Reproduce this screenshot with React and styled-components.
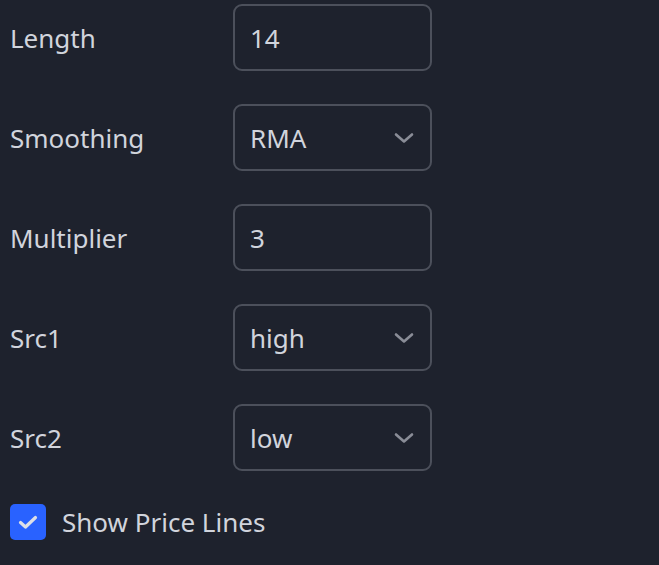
import React from "react";
import styled, { createGlobalStyle } from "styled-components";

const Global = createGlobalStyle`
  html, body { margin: 0; padding: 0; background: #1e222d; }
  body { font-family: "Noto Sans", "Open Sans", sans-serif; }
`;

const Panel = styled.div`
  width: 659px;
  height: 565px;
  box-sizing: border-box;
  padding: 4px 0 0 10px;
  background: #1e222d;
  color: #d1d4dc;
  display: flex;
  flex-direction: column;
  gap: 33px;
`;

const Row = styled.div`
  display: grid;
  grid-template-columns: 223px 199px;
  align-items: center;
`;

const Label = styled.div`
  font-size: 26px;
  line-height: 32px;
  color: #d1d4dc;
`;

const Field = styled.div`
  box-sizing: border-box;
  height: 67px;
  border: 2px solid #4c505b;
  border-radius: 9px;
  display: flex;
  align-items: center;
  justify-content: space-between;
  padding: 0 16px 0 15px;
  font-size: 26px;
  color: #d1d4dc;
`;

const Chevron = () => (
  <svg width="20" height="12" viewBox="0 0 20 12" fill="none">
    <path d="M2 2.5 L10 9.5 L18 2.5" stroke="#8a8d97" strokeWidth="2.6" strokeLinecap="round" strokeLinejoin="round" />
  </svg>
);

const CheckRow = styled.label`
  display: flex;
  align-items: center;
  gap: 16px;
  margin-top: 0;
  font-size: 26px;
  line-height: 36px;
  color: #d1d4dc;
`;

const Box = styled.span`
  width: 36px;
  height: 36px;
  border-radius: 5px;
  background: #2962ff;
  display: flex;
  align-items: center;
  justify-content: center;
`;

const fields = [
  { label: "Length", value: "14" },
  { label: "Smoothing", value: "RMA", select: true },
  { label: "Multiplier", value: "3" },
  { label: "Src1", value: "high", select: true },
  { label: "Src2", value: "low", select: true },
];

export default function App() {
  return (
    <>
      <Global />
      <Panel>
        {fields.map((f) => (
          <Row key={f.label}>
            <Label>{f.label}</Label>
            <Field>
              <span>{f.value}</span>
              {f.select && <Chevron />}
            </Field>
          </Row>
        ))}
        <CheckRow>
          <Box>
            <svg width="22" height="18" viewBox="0 0 22 18" fill="none">
              <path d="M3.5 9.5 L8.5 14 L18.5 4.5" stroke="#dcdfe7" strokeWidth="3.2" strokeLinecap="round" strokeLinejoin="round" />
            </svg>
          </Box>
          <span>Show Price Lines</span>
        </CheckRow>
      </Panel>
    </>
  );
}
